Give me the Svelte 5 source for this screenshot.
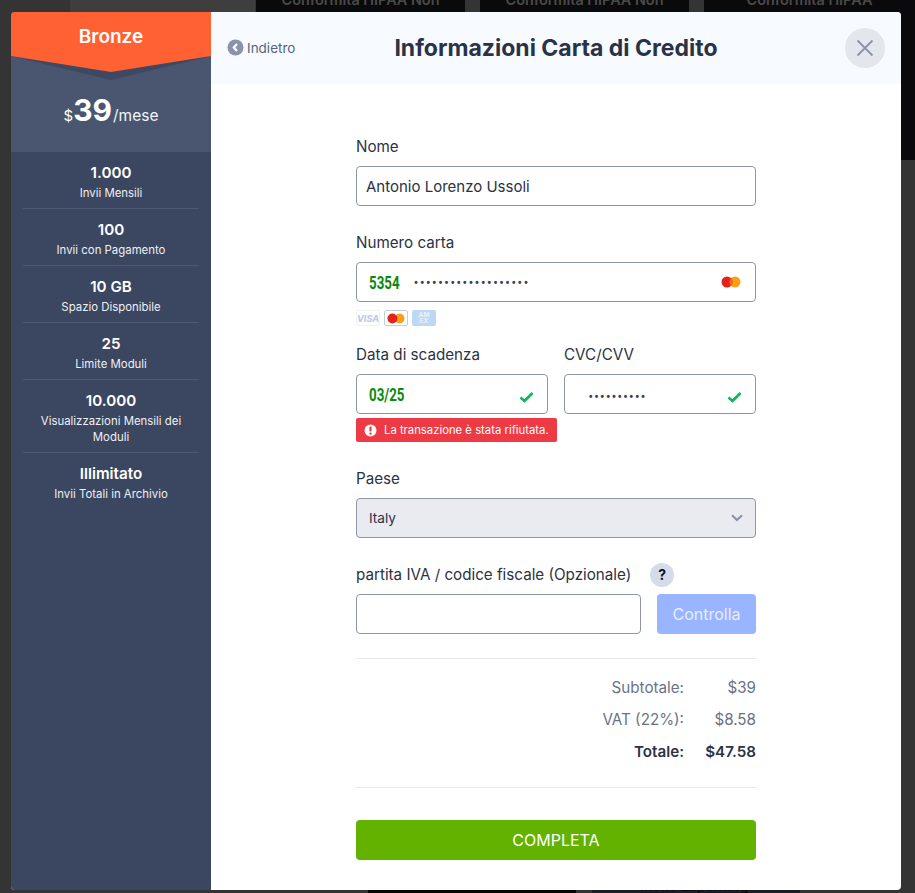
<script>
	const features = [
		{ value: '1.000', label: 'Invii Mensili' },
		{ value: '100', label: 'Invii con Pagamento' },
		{ value: '10 GB', label: 'Spazio Disponibile' },
		{ value: '25', label: 'Limite Moduli' },
		{ value: '10.000', label: 'Visualizzazioni Mensili dei Moduli' },
		{ value: 'Illimitato', label: 'Invii Totali in Archivio' }
	];
	const cardDots = '•'.repeat(19);
	const cvcDots = '•'.repeat(10);
</script>

<div class="backdrop" aria-hidden="true">
	<div class="bg-col a"></div>
	<div class="bg-col b"><span>Conformità HIPAA Non</span></div>
	<div class="bg-col c"><span>Conformità HIPAA Non</span></div>
	<div class="bg-col d"><span>Conformità HIPAA</span></div>
	<div class="bg-foot black"></div>
	<div class="bg-foot navy"><span>Invite Lapenting</span></div>
</div>

<div class="modal">
	<aside class="sidebar">
		<div class="plan">
			<div class="ribbon-shadow"></div>
			<div class="ribbon">Bronze</div>
			<div class="price">
				<span class="cur">$</span><span class="amount">39</span><span class="per">/mese</span>
			</div>
		</div>
		<ul class="features">
			{#each features as f}
				<li>
					<strong>{f.value}</strong>
					<span>{f.label}</span>
				</li>
			{/each}
		</ul>
	</aside>

	<main class="content">
		<header>
			<div class="back">
				<svg width="17" height="17" viewBox="0 0 17 17">
					<circle cx="8.5" cy="8.5" r="8" fill="#8a93aa" />
					<path d="M10 5 L6.8 8.5 L10 12" fill="none" stroke="#fff" stroke-width="2.2" />
				</svg>
				<span>Indietro</span>
			</div>
			<h1>Informazioni Carta di Credito</h1>
			<div class="close">
				<svg width="18" height="18" viewBox="0 0 18 18">
					<path d="M1.5 1.5 L16.5 16.5 M16.5 1.5 L1.5 16.5" stroke="#8a93a6" stroke-width="1.8" fill="none" />
				</svg>
			</div>
		</header>

		<form class="form">
			<div class="label first">Nome</div>
			<div class="field name">Antonio Lorenzo Ussoli</div>

			<div class="label">Numero carta</div>
			<div class="field">
				<span class="ok-num">5354</span>
				<span class="dots card-dots">{cardDots}</span>
				<svg class="mc" width="20" height="12" viewBox="0 0 20 12">
					<circle cx="14" cy="6" r="5.5" fill="#f9a01b" />
					<circle cx="6" cy="6" r="5.5" fill="#e2231a" />
					<path d="M10 2 a5.5 5.5 0 0 1 0 8 a5.5 5.5 0 0 1 0 -8" fill="#f0641e" />
				</svg>
			</div>
			<div class="cards">
				<div class="card visa">VISA</div>
				<div class="card master">
					<svg width="18" height="11" viewBox="0 0 20 12">
						<circle cx="14" cy="6" r="5.5" fill="#f9a01b" />
						<circle cx="6" cy="6" r="5.5" fill="#e2231a" />
					</svg>
				</div>
				<div class="card amex">AM<br />EX</div>
			</div>

			<div class="split">
				<div class="col">
					<div class="label">Data di scadenza</div>
					<div class="field">
						<span class="ok-num">03/25</span>
						<svg class="check" width="15" height="12" viewBox="0 0 15 12">
							<path d="M1.5 6.5 L5.5 10 L13.5 2" fill="none" stroke="#10b45c" stroke-width="2.6" />
						</svg>
					</div>
					<div class="error">
						<svg width="13" height="13" viewBox="0 0 13 13">
							<circle cx="6.5" cy="6.5" r="6" fill="#fff" />
							<rect x="5.4" y="2.6" width="2.2" height="5" rx="1" fill="#ee3a44" />
							<circle cx="6.5" cy="9.6" r="1.2" fill="#ee3a44" />
						</svg>
						<span>La transazione è stata rifiutata.</span>
					</div>
				</div>
				<div class="col">
					<div class="label">CVC/CVV</div>
					<div class="field">
						<span class="dots cvc-dots">{cvcDots}</span>
						<svg class="check" width="15" height="12" viewBox="0 0 15 12">
							<path d="M1.5 6.5 L5.5 10 L13.5 2" fill="none" stroke="#10b45c" stroke-width="2.6" />
						</svg>
					</div>
				</div>
			</div>

			<div class="label country">Paese</div>
			<div class="field select">
				<span>Italy</span>
				<svg width="12" height="8" viewBox="0 0 12 8">
					<path d="M1 1.2 L6 6 L11 1.2" fill="none" stroke="#8a93a6" stroke-width="2" />
				</svg>
			</div>

			<div class="label vat">
				<span>partita IVA / codice fiscale (Opzionale)</span>
				<span class="help">?</span>
			</div>
			<div class="vat-row">
				<div class="field"></div>
				<div class="verify">Controlla</div>
			</div>

			<div class="totals">
				<div class="row"><span>Subtotale:</span><b>$39</b></div>
				<div class="row"><span>VAT (22%):</span><b>$8.58</b></div>
				<div class="row total"><span>Totale:</span><b>$47.58</b></div>
			</div>

			<div class="submit">COMPLETA</div>
		</form>
	</main>
</div>

<style>
	:global(body) {
		margin: 0;
		background: #353535;
		height: 893px;
		overflow: hidden;
		font-family: Inter, 'Noto Sans', sans-serif;
	}

	.backdrop {
		position: absolute;
		inset: 0;
		overflow: hidden;
		background: #343434;
	}

	.bg-col {
		position: absolute;
		top: 0;
		height: 160px;
		text-align: center;
		color: #4a4a4a;
		font-size: 14.4px;
		font-weight: 600;
		line-height: 1;
		background: #0a0a0c;
	}
	.bg-col span {
		position: relative;
		top: -7px;
		display: block;
	}
	.bg-col.a { left: 70px; width: 185px; background: #3e3e3e; }
	.bg-col.b { left: 256px; width: 209px; }
	.bg-col.c { left: 480px; width: 209px; }
	.bg-col.d { left: 704px; width: 211px; }

	.bg-foot {
		position: absolute;
		top: 885px;
		height: 8px;
	}
	.bg-foot.black { left: 368px; width: 208px; background: #050506; }
	.bg-foot.navy { left: 592px; width: 208px; background: #1d1d2a; }
	.bg-foot span {
		position: absolute;
		left: 48px;
		top: -8px;
		white-space: nowrap;
		font-size: 14px;
		font-weight: 600;
		color: #0a0a0c;
	}

	.modal {
		position: relative;
		margin: 12px 0 0 11px;
		width: 890px;
		height: 878px;
		display: flex;
		border-radius: 4px;
		overflow: hidden;
		background: #fff;
	}

	.sidebar {
		width: 200px;
		flex-shrink: 0;
		background: #3b4660;
		color: #fff;
		display: flex;
		flex-direction: column;
	}

	.plan {
		position: relative;
		height: 140px;
		background: #4a5670;
	}

	.ribbon {
		position: relative;
		height: 60px;
		background: #ff6133;
		clip-path: polygon(0 0, 100% 0, 100% 44px, 50% 60px, 0 44px);
		text-align: center;
		font-size: 19px;
		font-weight: 600;
		line-height: 49px;
	}

	.ribbon-shadow {
		position: absolute;
		left: 0;
		top: 0;
		width: 100%;
		height: 68px;
		background: #3d4862;
		clip-path: polygon(0 0, 100% 0, 100% 44px, 50% 68px, 0 44px);
	}

	.price {
		position: relative;
		margin-top: 16px;
		display: flex;
		justify-content: center;
		align-items: baseline;
		line-height: 44px;
	}
	.cur { font-size: 15px; }
	.amount { font-size: 30px; font-weight: 700; }
	.per { font-size: 15.5px; margin-left: 1px; color: #f2f4f8; }

	.features {
		list-style: none;
		margin: 0;
		padding: 10px 12px 0;
	}
	.features li {
		display: flex;
		flex-direction: column;
		align-items: center;
		text-align: center;
		padding-bottom: 7.5px;
		margin-bottom: 10px;
		border-bottom: 1px solid #4d5972;
	}
	.features li:last-child { border-bottom: none; }
	.features strong {
		font-size: 15.2px;
		font-weight: 600;
		line-height: 22px;
	}
	.features span {
		font-size: 11.4px;
		line-height: 16px;
		margin-top: 0.5px;
		color: #eef0f5;
	}

	.content {
		flex: 1;
		min-width: 0;
		color: #2b3245;
	}

	header {
		position: relative;
		height: 72px;
		background: #f7fbff;
		display: flex;
		align-items: center;
		justify-content: center;
	}
	h1 {
		margin: 0;
		font-size: 23px;
		font-weight: 700;
		color: #2b3245;
	}
	.back {
		position: absolute;
		left: 16px;
		top: 27px;
		display: flex;
		align-items: center;
		gap: 3px;
		font-size: 13.5px;
		color: #59627a;
	}
	.close {
		position: absolute;
		right: 16px;
		top: 16px;
		width: 40px;
		height: 40px;
		border-radius: 50%;
		background: #e4e6ee;
		display: flex;
		align-items: center;
		justify-content: center;
	}

	.form {
		width: 400px;
		margin: 0 auto;
		padding-top: 53px;
	}

	.label {
		height: 20px;
		line-height: 20px;
		font-size: 15.2px;
		color: #2b3245;
		margin: 27px 0 9px;
	}
	.label.first { margin-top: 0; }
	.label.vat {
		display: flex;
		align-items: center;
		gap: 19px;
	}

	.field {
		position: relative;
		height: 40px;
		box-sizing: border-box;
		border: 1px solid #8d96ab;
		border-radius: 4px;
		background: #fff;
		display: flex;
		align-items: center;
		padding: 0 12px;
		font-size: 15px;
		color: #2b3245;
	}
	.field.name { padding: 0 9px; }

	.ok-num {
		font-family: Roboto, sans-serif;
		font-weight: 700;
		font-size: 18px;
		color: #0b8a0b;
		display: inline-block;
		transform: scaleX(0.74);
		transform-origin: left center;
	}

	.dots {
		color: #3c404c;
		font-size: 10px;
		font-weight: 700;
		font-family: 'Liberation Sans', sans-serif;
	}
	.card-dots { margin-left: 4px; letter-spacing: 2.6px; }
	.cvc-dots {
		margin-left: 12px;
		letter-spacing: 2.3px;
		transform: translateY(2px);
	}

	.mc {
		position: absolute;
		right: 14px;
		top: 13px;
	}
	.check {
		position: absolute;
		right: 13px;
		top: 16px;
	}

	.cards {
		display: flex;
		gap: 4px;
		margin-top: 8px;
		height: 16px;
	}
	.card {
		width: 24px;
		height: 16px;
		box-sizing: border-box;
		border-radius: 2px;
		display: flex;
		align-items: center;
		justify-content: center;
	}
	.visa {
		border: 1px solid #eef0f6;
		color: #c5c9e6;
		font-size: 9px;
		font-weight: 800;
		font-style: italic;
	}
	.master { border: 1px solid #c9ccd6; }
	.amex {
		background: #bcd8f2;
		color: #e8f2fb;
		font-size: 6.5px;
		line-height: 6.5px;
		font-weight: 700;
		text-align: center;
	}

	.split {
		display: flex;
		gap: 16px;
	}
	.col { flex: 1; min-width: 0; }
	.col .label { margin-top: 19px; }

	.error {
		display: flex;
		align-items: center;
		gap: 7px;
		width: 201px;
		height: 24px;
		box-sizing: border-box;
		margin-top: 4px;
		padding-left: 8px;
		background: #ee3a44;
		border-radius: 2px;
		color: #fff;
		font-size: 11.3px;
		white-space: nowrap;
	}

	.select {
		background: #e9ebf1;
		justify-content: space-between;
		font-size: 13.6px;
		padding: 0 12px;
	}

	.help {
		width: 24px;
		height: 24px;
		border-radius: 50%;
		background: #d5dbe8;
		color: #0a1020;
		font-size: 14px;
		font-weight: 700;
		display: flex;
		align-items: center;
		justify-content: center;
	}

	.vat-row {
		display: flex;
		gap: 16px;
	}
	.vat-row .field { width: 285px; }
	.verify {
		flex: 1;
		height: 40px;
		border-radius: 4px;
		background: #99b5ff;
		color: #e6edff;
		font-size: 16px;
		display: flex;
		align-items: center;
		justify-content: center;
	}

	.totals {
		margin-top: 24px;
		padding-top: 12px;
		border-top: 1px solid #e5e8ee;
		border-bottom: 1px solid #e5e8ee;
		height: 130px;
		box-sizing: border-box;
	}
	.row {
		display: flex;
		justify-content: flex-end;
		height: 32px;
		align-items: center;
		font-size: 15.2px;
		color: #6a7288;
	}
	.row b {
		width: 72px;
		text-align: right;
		font-weight: 400;
	}
	.row.total { color: #2b3245; font-weight: 600; }
	.row.total b { font-weight: 600; }

	.submit {
		margin-top: 32px;
		height: 40px;
		border-radius: 4px;
		background: #64b200;
		color: #fff;
		font-size: 16px;
		display: flex;
		align-items: center;
		justify-content: center;
	}
</style>
